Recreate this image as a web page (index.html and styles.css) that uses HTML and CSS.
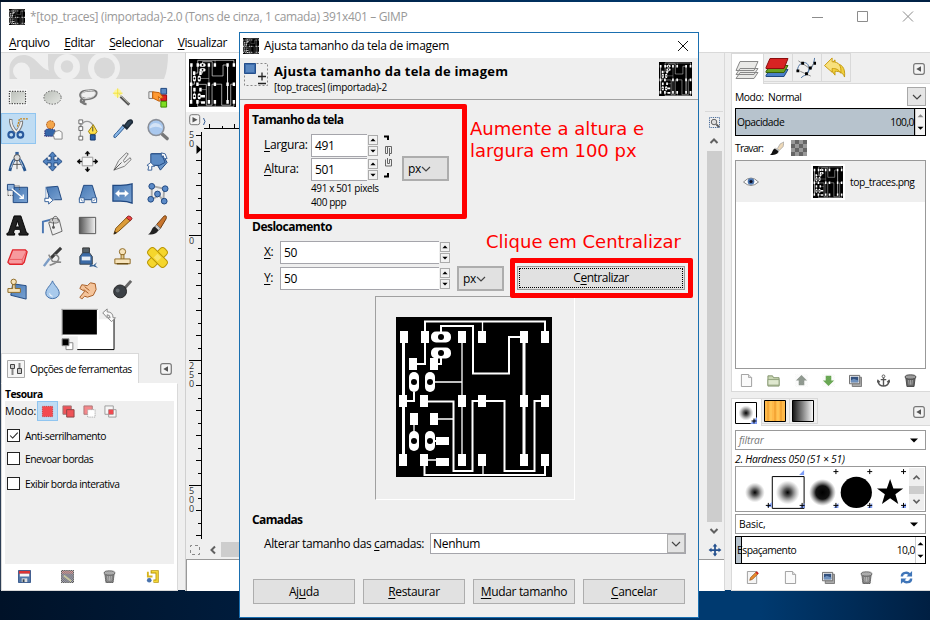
FILE: index.html
```html
<!DOCTYPE html>
<html lang="pt-BR">
<head>
<meta charset="utf-8">
<title>GIMP</title>
<link rel="stylesheet" href="styles.css">
</head>
<body>
<svg class="defs" width="0" height="0">
  <defs>
    <linearGradient id="gGray" x1="0" y1="0" x2="1" y2="1"><stop offset="0" stop-color="#b9bdb7"/><stop offset="1" stop-color="#e6e8e4"/></linearGradient>
    <linearGradient id="gBlue" x1="0" y1="0" x2="1" y2="1"><stop offset="0" stop-color="#4577b4"/><stop offset="1" stop-color="#7ba3d2"/></linearGradient>
    <linearGradient id="gRamp" x1="0" x2="1" y1="0" y2="0"><stop offset="0" stop-color="#555"/><stop offset="1" stop-color="#f4f4f4"/></linearGradient>
    <linearGradient id="gBlack" x1="0" x2="1" y1="0" y2="0"><stop offset="0" stop-color="#111"/><stop offset="1" stop-color="#fff"/></linearGradient>
    <radialGradient id="gSoft"><stop offset="0" stop-color="#000"/><stop offset=".35" stop-color="#333" stop-opacity=".8"/><stop offset="1" stop-color="#777" stop-opacity="0"/></radialGradient>
    <radialGradient id="gMid"><stop offset="0" stop-color="#000"/><stop offset=".5" stop-color="#111"/><stop offset="1" stop-color="#555" stop-opacity="0"/></radialGradient>
    <pattern id="dither" width="2" height="2" patternUnits="userSpaceOnUse"><path d="M0 0h1v1H0zM1 1h1v1H1z" fill="#efefef"/></pattern>
  </defs>
  <symbol id="board" viewBox="0 0 156 160">
    <path fill="#000" d="M0 0h156v160H0z"/>
    <g fill="none" stroke="#fff" stroke-width="2">
      <path d="M17 47h12V4.500h120V20M45 20V9h32v47.500h36V20h11M45 36v11h-7M18 75v9H8M28 84.500h29.500V154h19V84H86M90 84h18.500v70h30V84H149M28.500 142v16H149v-16M34 124h8"/>
      <path stroke-width="3" d="M7.500 20v122M128 20v122"/>
      <path stroke-width="1.300" d="M86.500 4.500V20M66 20v122M38 65h28M42 102h15M18 108v8M32 143h8M87 158v-12"/>
    </g>
    <path fill="#fff" d="M4 14h8v12H4zM25 14h8v12h-8zM62 14h8v12h-8zM82 14h8v12h-8zM124 14h8v12h-8zM145 14h8v12h-8zM3 78h8v12H3zM24 78h8v12h-8zM62 78h8v12h-8zM82 78h8v12h-8zM124 78h8v12h-8zM145 78h8v12h-8zM3 137h8v12H3zM24 137h8v12h-8zM62 137h8v12h-8zM82 137h8v12h-8zM124 137h8v12h-8zM145 137h8v12h-8zM13 41h8v12h-8zM34 41h8v12h-8zM14 96h8v12h-8zM34 96h8v12h-8zM40 120h13v8H40zM40 141h13v8H40z"/>
    <g fill="#fff"><rect x="35" y="14.500" width="20" height="11" rx="5"/><rect x="35" y="30.500" width="20" height="11" rx="5"/><rect x="13" y="55" width="10" height="20" rx="5"/><rect x="29" y="55" width="10" height="20" rx="5"/><rect x="13" y="114" width="10" height="20" rx="5"/><rect x="29" y="114" width="10" height="20" rx="5"/></g>
    <g fill="#000"><circle cx="45" cy="20" r="3"/><circle cx="45" cy="36" r="3"/><circle cx="18" cy="65" r="3"/><circle cx="34" cy="65" r="3"/><circle cx="18" cy="124" r="3"/><circle cx="34" cy="124" r="3"/></g>
  </symbol>
  <symbol id="collapse" viewBox="0 0 12 12"><rect x=".7" y=".7" width="10.600" height="10.600" rx="2" fill="#f4f4f4" stroke="#777" stroke-width="1.200"/><path d="M8 3.300v5.400L3.300 6z" fill="#555"/></symbol>
  <symbol id="page" viewBox="0 0 14 14"><path d="M1.500.5h7.700l3.300 3.300v9.700h-11z" fill="#fafafa" stroke="#999"/><path d="M9.200.5v3.300h3.300" fill="#ddd" stroke="#aaa"/></symbol>
  <symbol id="dup" viewBox="0 0 14 14"><path d="M3.500 3.500h10v10h-10z" fill="#aaa" stroke="#777"/><path d="M.5 1.500h11v9H.5z" fill="#eee" stroke="#666"/><path d="M2 3h8v6H2z" fill="#33517e"/><path d="M2 7l3-2 5 2v2H2z" fill="#6d90bd"/></symbol>
  <symbol id="trash" viewBox="0 0 14 14"><path d="M2 4h10l-1.200 9.500H3.200z" fill="#666" stroke="#444"/><ellipse cx="7" cy="3.200" rx="5.800" ry="2.300" fill="#9b9b9b" stroke="#444"/><path d="M5 6.500l.5 5M7 6.500v5M9 6.500l-.5 5" stroke="#aaa"/></symbol>
  <symbol id="spinUp" viewBox="0 0 10 6"><path d="M5 1l3.300 3.500H1.700z" fill="currentColor"/></symbol>
  <symbol id="spinDown" viewBox="0 0 10 6"><path d="M5 5l3.300-3.500H1.700z" fill="currentColor"/></symbol>
  <symbol id="chev" viewBox="0 0 10 8"><path d="M1 2l4 4 4-4" fill="none" stroke="#444" stroke-width="1.200"/></symbol>
  <symbol id="chevBold" viewBox="0 0 10 8"><path d="M1.500 6L5 2.500 8.500 6" fill="none" stroke="#606060" stroke-width="2"/></symbol>
</svg>

<div class="window">
  <header class="titlebar">
    <svg class="app-icon" viewBox="0 0 156 160" preserveAspectRatio="none"><use href="#board"/></svg>
    <span class="title">*[top_traces] (importada)-2.0 (Tons de cinza, 1 camada) 391x401 – GIMP</span>
    <svg class="win-buttons" viewBox="0 0 110 20"><path d="M4 10.500h11M49.500 4.500h10v10h-10zM95 4.500l10 10M105 4.500l-10 10" fill="none" stroke="#8c8c8c"/></svg>
  </header>
  <nav class="menubar"><span><u>A</u>rquivo</span><span><u>E</u>ditar</span><span><u>S</u>elecionar</span><span><u>V</u>isualizar</span></nav>

  <main class="workspace">
    <section class="toolbox">
      <svg class="wilber" viewBox="0 0 184 28">
        <path d="M9.500 26V14C11 4 22-1 31 4C39 8 42 18 53 18V8L49 1h119c0 9-1 18-4 25z" fill="#d9d9d9"/>
        <circle cx="21.500" cy="18" r="8.500" fill="#efefef"/><path d="M13 18h17v9H18z" fill="#efefef"/>
        <path d="M33 26c6-1 13-4 17-8l6 8z" fill="#d9d9d9"/>
        <path d="M48 1h7v24a16 16 0 0 1-7-13z" fill="#d9d9d9"/>
        <circle cx="67" cy="14" r="13" fill="#efefef"/>
        <circle cx="67" cy="13.500" r="6.200" fill="#d9d9d9"/>
        <circle cx="104" cy="15" r="16" fill="#efefef"/><circle cx="104.500" cy="15" r="10.500" fill="#d9d9d9"/>
      </svg>
      <div class="tools">
        <span class="tool"><svg viewBox="0 0 24 24"><path d="M4 5h17v14H4z" fill="url(#gGray)" stroke="#fff" stroke-width="2"/><path d="M3.500 5.500h17v13h-17z" fill="none" stroke="#111" stroke-dasharray="1.500 1.200"/></svg></span>
        <span class="tool"><svg viewBox="0 0 24 24"><ellipse cx="12" cy="12" rx="9" ry="7" fill="url(#gGray)" stroke="#555" stroke-dasharray="1.500 1.500"/></svg></span>
        <span class="tool"><svg viewBox="0 0 24 24"><g fill="none" stroke="#777" stroke-width="2.400"><path d="M8 14C3 11 3 6 10 5s13-1 11 4-11 5-13 4-4 3-2 4 4-3 1-4"/><path d="M7 16c0 3 2 3 4 3"/></g><path d="M8 13.500C4 10 5 7 10 5.500s11-1 10 3-10 5-12 4.500" fill="none" stroke="#ddd"/></svg></span>
        <span class="tool"><svg viewBox="0 0 24 24"><circle cx="7" cy="7.500" r="4" fill="#fff68a" opacity=".8"/><path d="M7 2.500v10M2 7.500h10" stroke="#f2e23c"/><path d="M10 11l9 8.500" stroke="#555" stroke-width="3"/><path d="M8 8l10.500 10" stroke="#c8c8b8"/></svg></span>
        <span class="tool"><svg viewBox="0 0 24 24"><path d="M15.500 2.500h6v6h-6z" fill="#5b8ac4" stroke="#1c447c"/><path d="M15.500 9.500h6v6h-6z" fill="#d22" stroke="#900"/><path d="M15.500 16h6v6h-6z" fill="#7fdd22" stroke="#3d8a00"/><path d="M3 6h4v7H3z" fill="#eee" stroke="#777"/><path d="M7 6l7 1 4 5-3 1-2-2 1 5-6-3H7z" fill="#ff9a33" stroke="#c05a00"/></svg></span>

        <span class="tool selected"><svg viewBox="0 0 24 24"><path d="M5 2c-1 6 2 10 6 14M16 4c1 5-2 8-5 12" stroke="#777" stroke-width="3.600" fill="none"/><path d="M5 3c0 5 2 9 6 13M16 5c0 4-2 7-5 11" stroke="#eee" stroke-width="1.800" fill="none"/><circle cx="5.500" cy="18.500" r="3" fill="none" stroke="#2a5a9e" stroke-width="2.200"/><circle cx="15" cy="18.500" r="3" fill="none" stroke="#2a5a9e" stroke-width="2.200"/><path d="M12 10l2-8h9" fill="none" stroke="#c98310" stroke-width="1.300" stroke-dasharray="2 1"/></svg></span>
        <span class="tool"><svg viewBox="0 0 24 24"><path d="M4 19v-6q5-4 11 0v6z" fill="#3566a8" stroke="#2b1a66" stroke-dasharray="1.300 1"/><circle cx="10" cy="7" r="4.200" fill="#f3a64b" stroke="#a64d10" stroke-dasharray="2 1"/><path d="M15 14l4-1 3 2v7h-8l-1-4z" fill="#fafafa" stroke="#888"/></svg></span>
        <span class="tool"><svg viewBox="0 0 24 24"><path d="M4.500 4v17" stroke="#888"/><path d="M3 2h4v4H3zM3 9h4v4H3zM3 19h4v4H3z" fill="#fff" stroke="#666"/><path d="M5 8C8 2 15 2 18 8" fill="none" stroke="#999" stroke-width="1.500"/><path d="M18 7l4 7-2 3h-5l-2-3z" fill="#ffe14a" stroke="#9a7a00"/><path d="M17.500 9v5" stroke="#444"/><path d="M15 17.500h5V23h-5z" fill="#2c61a5" stroke="#14386d"/></svg></span>
        <span class="tool"><svg viewBox="0 0 24 24"><path d="M15 9l-8 9q-3 4-4 2t3-5l7-8z" fill="#88b6e6" stroke="#2c5a92"/><path d="M12 7l5 5M14 8l4-5q3-2 4 0t-1 3l-4 5z" stroke="#1d2a38" stroke-width="1.500" fill="#2d4153"/></svg></span>
        <span class="tool"><svg viewBox="0 0 24 24"><path d="M17 17l5 4.500" stroke="#777" stroke-width="3.500" stroke-linecap="round"/><circle cx="10.500" cy="10" r="8.300" fill="#a9c8ee" stroke="#8a8f98" stroke-width="1.600"/><path d="M4 11q6-4 13 0A7 7 0 0 0 4 9z" fill="#d4e3f6"/></svg></span>

        <span class="tool"><svg viewBox="0 0 24 24"><path d="M11.500 2v5" stroke="#335f99" stroke-width="3.500"/><path d="M10 9C6 12 5 17 4 22M13 9c4 3 5 8 7 13" fill="none" stroke="#26558f" stroke-width="3"/><path d="M9 9l-4 10M14 9l4 9" stroke="#b9c7d8"/><circle cx="11.500" cy="8" r="3.200" fill="#ddd" stroke="#555"/><path d="M7 15h9M11.500 11v9" stroke="#555"/></svg></span>
        <span class="tool"><svg viewBox="0 0 24 24"><path d="M12 2l4 4.500h-2.500v4h4V8l4.500 4-4.500 4v-2.500h-4v4H16L12 22l-4-4.500h2.500v-4h-4V16L2 12l4.500-4v2.500h4v-4H8z" fill="#5385c2" stroke="#1f4780"/></svg></span>
        <span class="tool"><svg viewBox="0 0 24 24"><path d="M6.500 7.500h11v9h-11z" fill="#f6f6f6" stroke="#999"/><path d="M12 1l2.500 3h-2v2h-1V4h-2zM12 23l2.500-3h-2v-2h-1v2h-2zM1 12l3-2.500v2h2v1H4v2zM23 12l-3-2.500v2h-2v1h2v2z" fill="#000" stroke="#000" stroke-width=".5"/></svg></span>
        <span class="tool"><svg viewBox="0 0 24 24"><path d="M3 21l5-10 8-8 2 1-5 7 1 2 6-5 1 2-7 7z" fill="#eee" stroke="#777"/><path d="M3 21l8-8" stroke="#555"/></svg></span>
        <span class="tool"><svg viewBox="0 0 24 24"><path d="M6 4h11l5 9-7 8-3-5-6-1z" fill="url(#gBlue)" stroke="#1f4780"/><path d="M5 4h11l4 9-6 3H5z" fill="#5c8bc4" stroke="#1f4780"/><path d="M16 3l4 1 2 5h-3l-1-3-2 1zM2 21l1-4-2-1 4-3 4 4H6v4z" fill="#fff" stroke="#3a6096"/></svg></span>

        <span class="tool"><svg viewBox="0 0 24 24"><path d="M7.500 5.500h15v16h-15z" fill="url(#gBlue)" stroke="#1f4780"/><path d="M1.500 2.500h7v6h-7z" fill="#8fb2dc" stroke="#1f4780"/><path d="M2 14V9M2 14h5M9 4h5v5" fill="none" stroke="#444" stroke-dasharray="1 1"/><path d="M6 7l12 10m0-4v4h-4" fill="none" stroke="#fff" stroke-width="1.400"/></svg></span>
        <span class="tool"><svg viewBox="0 0 24 24"><path d="M5.500 5.500l12-1 4 14h-12z" fill="url(#gBlue)" stroke="#1f4780"/><path d="M5 5v13h9" fill="none" stroke="#8caad0"/><path d="M4 17h4v-2.500l4.500 4.500L8 23v-2.500H4z" fill="#fff" stroke="#335f99"/></svg></span>
        <span class="tool"><svg viewBox="0 0 24 24"><path d="M8 3.500h9l4.500 15h-18z" fill="url(#gBlue)" stroke="#1f4780"/><path d="M3.500 16.500h5v5h-5zM16.500 16.500h5v5h-5z" fill="#fff" stroke="#335f99"/><path d="M5 18l2 2M20 18l-2 2" stroke="#335f99"/></svg></span>
        <span class="tool"><svg viewBox="0 0 24 24"><path d="M2 3.500h8q7 0 12-1.500v20q-5-2-12-2H2z" fill="url(#gBlue)" stroke="#1f4780" stroke-width="1.300"/><path d="M4 12l5-4.500v3h5v-3l5 4.500-5 4.500v-3H9v3z" fill="#fff" stroke="#5d84b8" stroke-width=".6"/></svg></span>
        <span class="tool"><svg viewBox="0 0 24 24"><path d="M6 4l13 3-1 13-4-6-8 4z" fill="none" stroke="#aaa" stroke-width="2"/><g fill="#5c8bc8" stroke="#1f4780"><circle cx="6" cy="4.500" r="3"/><circle cx="20" cy="7" r="3"/><circle cx="5" cy="18" r="3"/><circle cx="19" cy="20" r="3"/><circle cx="12" cy="12.500" r="3"/></g></svg></span>

        <span class="tool"><svg viewBox="0 0 24 24"><path d="M8.500 2h7l6 18h1.500v2h-9.500v-2h2l-1-4H9l-1.500 4H9v2H1v-2h1.500zM12 7l-2 6.500h4z" fill="#222" fill-rule="evenodd" stroke="#000"/></svg></span>
        <span class="tool"><svg viewBox="0 0 24 24"><path d="M2 20V8l8-2" fill="none" stroke="#4a77b3" stroke-width="2"/><path d="M8 9l11-3 3 12-10 4z" fill="#eee" stroke="#666"/><ellipse cx="14" cy="7" rx="5" ry="2.500" fill="#ccc" stroke="#777"/><path d="M12 7c0-6 6-6 6 0M13 8v5" fill="none" stroke="#555"/><circle cx="13" cy="14" r="1.500" fill="#555"/></svg></span>
        <span class="tool"><svg viewBox="0 0 24 24"><path d="M3.500 3.500h17v17h-17z" fill="url(#gRamp)" stroke="#555"/></svg></span>
        <span class="tool"><svg viewBox="0 0 24 24"><path d="M3 21l2-6L17 3l4 3L8 18z" fill="#dc9c37" stroke="#7a4c08"/><path d="M16 4l2-2q3 0 4 3l-2 2z" fill="#e44" stroke="#8a2020"/><path d="M3 21l1-3 2 2z" fill="#222"/></svg></span>
        <span class="tool"><svg viewBox="0 0 24 24"><path d="M11 11L19 2q3-1 2 3l-6 10z" fill="#c9762e" stroke="#6d3a0c"/><path d="M11 11l4 4-2 2-4-3z" fill="#ccc" stroke="#777"/><path d="M9 13l4 4c-2 4-7 5-11 4 4-1 3-6 7-8z" fill="#222"/></svg></span>

        <span class="tool"><svg viewBox="0 0 24 24"><path d="M7 4h13l2 2-3 11-2 2H4l-2-2 1-3z" fill="#f79a9e" stroke="#e0252c" stroke-width="1.400" stroke-linejoin="round"/><path d="M3 14h14l4-8M17 14v4" fill="none" stroke="#ec5e63"/></svg></span>
        <span class="tool"><svg viewBox="0 0 24 24"><path d="M21 2L10 13" stroke="#3a3a3a" stroke-width="3.200"/><path d="M9 13l-6 8" stroke="#7b9cc5" stroke-width="2.500"/><path d="M8 9l4 7 9 1M14 9c4 0 6 4 3 7s-5 3-8 4" fill="none" stroke="#888" stroke-width="1.600"/></svg></span>
        <span class="tool"><svg viewBox="0 0 24 24"><path d="M7 2h7v5H7z" fill="#556068" stroke="#333"/><path d="M7 7h7l3 4v8H4v-8z" fill="#3b6aa6" stroke="#3a444c"/><path d="M6 11h9v4H6z" fill="#e8eef5"/><path d="M15 18l3 2 4-3-2 3 3 3-5-2-4 1z" fill="#356296"/></svg></span>
        <span class="tool"><svg viewBox="0 0 24 24"><circle cx="12" cy="6" r="3.300" fill="#f6e3bb" stroke="#8d6a25"/><path d="M10.500 9h3v5h-3z" fill="#e8cf96" stroke="#8d6a25"/><path d="M4 13.500h16v5H4z" fill="#f6e3bb" stroke="#8d6a25"/><path d="M6 18.500h12" stroke="#6d5015" stroke-width="1.500"/></svg></span>
        <span class="tool"><svg viewBox="0 0 24 24"><g fill="#f5d62c" stroke="#b99500"><rect x="0" y="7.500" width="24" height="9" rx="3.500" transform="rotate(-45 12 12)"/><rect x="0" y="7.500" width="24" height="9" rx="3.500" transform="rotate(45 12 12)"/></g><path d="M12 8l4 4-4 4-4-4z" fill="#f9e568"/></svg></span>

        <span class="tool"><svg viewBox="0 0 24 24"><path d="M7 6l14 2v14L5 18z" fill="url(#gBlue)" stroke="#1f4780"/><circle cx="8" cy="4" r="2.800" fill="#f6e3bb" stroke="#8d6a25"/><path d="M7 7h2.500v4H15v4H2v-4h5z" fill="#f6e3bb" stroke="#8d6a25"/></svg></span>
        <span class="tool"><svg viewBox="0 0 24 24"><path d="M12 3c2 5 7 8 7 13a7 5.500 0 0 1-14 0c0-5 5-8 7-13z" fill="#a9caec" stroke="#3f6ea8"/><path d="M9 16q0 3 3 3" fill="none" stroke="#fff"/></svg></span>
        <span class="tool"><svg viewBox="0 0 24 24"><path d="M4 20l5-6-5-3 2-4 6 1 3-3 5 1 1 6-3 6-6 2-3-1-3 3z" fill="#f4c49b" stroke="#a65b22"/><path d="M9 9l5 4M8 12l5 4" stroke="#a65b22"/></svg></span>
        <span class="tool"><svg viewBox="0 0 24 24"><path d="M13 12l8-9" stroke="#666" stroke-width="3"/><circle cx="9.500" cy="14" r="6.700" fill="#3c4146" stroke="#222"/><circle cx="7" cy="13" r="2" fill="#646b70"/></svg></span>
      </div>
      <svg class="swatches" viewBox="0 0 184 50">
        <path d="M78.500 14.500h37v31h-37z" fill="#fff"/><path d="M78 45.500h37.500V14" stroke="#000" fill="none"/>
        <path d="M62 5h38v27H62z" fill="#fff"/><path d="M62 4.500h37M62.500 4v27" stroke="#999"/><path d="M63 5h35v25H63z"/>
        <path d="M104 8l4.500-4v3q6 0 6 6h2.500l-4 4-4-4h2.500q0-3-3-3v3z" fill="#f8f8f8" stroke="#888"/>
        <path d="M66.500 38.500h7v7h-7z" fill="#fff" stroke="#888"/><path d="M62.500 34.500h7v7h-7z" stroke="#888"/>
      </svg>
      <div class="opts-tabs">
        <div class="opts-tab"><svg viewBox="0 0 18 18"><path d="M.5.500h17v17H.5z" fill="#f6f6f6" stroke="#aaa"/><path d="M5.500 8v7M12.500 3v9" stroke="#888" stroke-width="2"/><path d="M3.500 4.500h4v4h-4zM10.500 8.500h4v5h-4z" fill="#ccc" stroke="#444"/></svg><span>Opções de ferramentas</span></div>
        <svg class="collapse"><use href="#collapse"/></svg>
      </div>
      <div class="opts">
        <b>Tesoura</b>
        <div class="opts-body">
          <div class="mode"><span>Modo:</span>
            <span class="mbtn on"><svg viewBox="0 0 14 14"><path d="M1.500 1.500h11v11h-11z" fill="#f44a4f" stroke="#c33" stroke-dasharray="1 1"/></svg></span>
            <span class="mbtn"><svg viewBox="0 0 14 14"><path d="M1 1h9v9H1z" fill="#ef5358" stroke="#977"/><path d="M5 5h8v8H5z" fill="#ef5358" stroke="#844"/></svg></span>
            <span class="mbtn"><svg viewBox="0 0 14 14"><path d="M1 1h9v9H1z" fill="#f4888b" stroke="#a77"/><path d="M5 5h8v8H5z" fill="#fff" stroke="#999" stroke-dasharray="1 1"/></svg></span>
            <span class="mbtn"><svg viewBox="0 0 14 14"><path d="M1 1h9v9H1zM5 5h8v8H5z" fill="#f6f6f6" stroke="#999"/><path d="M5 5h5v5H5z" fill="#ef4a50"/></svg></span>
          </div>
          <label class="check"><i><svg viewBox="0 0 13 13"><path d="M2.500 6.500l3 3 6-6.500" fill="none" stroke="#222" stroke-width="1.200"/></svg></i>Anti-serrilhamento</label>
          <label class="check"><i></i>Enevoar bordas</label>
          <label class="check last"><i></i>Exibir borda interativa</label>
        </div>
        <div class="opts-actions">
          <svg viewBox="0 0 14 14"><path d="M.5.500h13v13H.5z" fill="#5277a8" stroke="#35568a"/><path d="M1 1h12v3H1z" fill="#d33"/><path d="M2 4h10v3H2z" fill="#f5f5f5"/><path d="M4 9h6v4H4z" fill="#ddd"/><path d="M5 10h2v3H5z" fill="#345"/></svg>
          <svg viewBox="0 0 14 14"><path d="M.5.500h13v13H.5z" fill="#445" stroke="#333"/><path d="M1 1h12v3H1z" fill="#844"/><path d="M3 6l8 6" stroke="#aa6" stroke-width="2"/><path d="M0 0h14v14H0z" fill="url(#dither)" opacity=".8"/></svg>
          <svg viewBox="0 0 14 14"><use href="#trash"/><path d="M0 0h14v14H0z" fill="url(#dither)" opacity=".4"/></svg>
          <svg viewBox="0 0 14 14"><path d="M5 2h7v10H8" fill="none" stroke="#b89400" stroke-width="3.400"/><path d="M6 2h6v10H8" fill="none" stroke="#f5d93c" stroke-width="1.600"/><path d="M2 2v5h5" fill="none" stroke="#d8b41c" stroke-width="2"/><circle cx="3.500" cy="11" r="2.500" fill="#4a74ae"/></svg>
        </div>
      </div>
    </section>

    <section class="image-window">
      <div class="image-tabs"><div class="image-tab"><svg viewBox="0 0 156 160" preserveAspectRatio="none"><use href="#board"/></svg></div></div>
      <div class="canvas-row">
        <svg class="vruler" viewBox="0 0 55 429">
          <rect x="3.700" y="3.700" width="10" height="10" rx="2" fill="#f4f4f4" stroke="#777"/><path d="M6.500 6v5.400L11.500 8.700z" fill="#555"/>
          <path d="M18 17.500h37M23.500 13v4M36.500 15v2M48.500 13v4M15.500 21v407" stroke="#000"/>
          <path d="M15.500 38.500l-5-4.500v9z" fill="#000"/>
          <path d="M10 24.500h5M10 49.500h5M12 62.500h3M10 74.500h5M12 87.500h3M10 99.500h5M12 112.500h3M3 124.500h12M12 137.500h3M10 149.500h5M12 162.500h3M10 174.500h5M12 187.500h3M10 199.500h5M12 212.500h3M10 224.500h5M12 237.500h3M3 249.500h12M12 262.500h3M10 274.500h5M12 287.500h3M10 299.500h5M12 312.500h3M10 324.500h5M12 337.500h3M10 349.500h5M12 362.500h3M3 374.500h12M12 387.500h3M10 399.500h5M12 412.500h3M10 424.500h5" stroke="#000"/>
          <g class="ruler-text"><text><tspan x="3" y="27">5</tspan><tspan x="3" y="36">0</tspan></text><text x="3" y="133">0</text><text><tspan x="3" y="258">2</tspan><tspan x="3" y="267">5</tspan><tspan x="3" y="276">0</tspan></text><text><tspan x="3" y="383">5</tspan><tspan x="3" y="392">0</tspan><tspan x="3" y="401">0</tspan></text></g>
          <path d="M17.500 7q3 3.500 0 7" fill="none" stroke="#345c94"/>
        </svg>
        <div class="vscroll">
          <svg class="zoomfit" viewBox="0 0 12 12"><path d="M.5.500h11v11H.5z" fill="none" stroke="#1c4a86" stroke-dasharray="1 1"/><circle cx="5.500" cy="5.500" r="3" fill="#ddd" stroke="#555"/><path d="M8 8l3 3" stroke="#555" stroke-width="2"/></svg>
          <svg class="arrow"><use href="#chevBold"/></svg>
          <div class="vthumb"></div>
          <svg class="arrow down"><use href="#chevBold"/></svg>
        </div>
      </div>
      <div class="hscroll">
        <svg class="qmask" viewBox="0 0 12 12"><path d="M1.500 1.500h9v9h-9z" fill="none" stroke="#888" stroke-dasharray="3 3" stroke-dashoffset="1.500"/></svg>
        <span class="hleft"><svg><use href="#chevBold"/></svg></span><span class="hthumb"></span>
        <svg class="nav" viewBox="0 0 24 24"><path d="M12 1l4 5h-2.500v4.500h4.500V8l5 4-5 4v-2.500h-4.500V18H16l-4 5-4-5h2.500v-4.500H6V16l-5-4 5-4v2.500h4.500V6H8z" fill="#24508e"/></svg>
      </div>
      <div class="status"></div>
    </section>

    <section class="dock">
      <div class="tabs">
        <span class="tab active"><svg viewBox="0 0 24 20"><path d="M1 19l4-6h18l-4 6zM1 15l4-6h18l-4 6zM1 11l4-9h18l-4 9z" fill="#e9e9e7" stroke="#888"/></svg></span>
        <span class="tab"><svg viewBox="0 0 24 20"><path d="M1 18l4-6h18l-4 7H1z" fill="#4a7fc8" stroke="#1f4780"/><path d="M1 14l4-6h18l-4 7H1z" fill="#6aa022" stroke="#376008"/><path d="M1 10l4-9h18l-4 10H1z" fill="#d82323" stroke="#8c0d0d"/></svg></span>
        <span class="tab"><svg viewBox="0 0 24 22"><path d="M3 14c1-10 12-11 12-2s-6 6-8 10M21 1c-1 9-4 12-9 16" fill="none" stroke="#476f9f"/><path d="M4 4l12 8 5-6M6 15l11 5" fill="none" stroke="#888"/><path d="M2 13h3v3H2zM7 5h3v3H7zM15 10h3v3h-3zM20 5h2.500v3H20zM11 16h3v3h-3z"/></svg></span>
        <span class="tab"><svg viewBox="0 0 24 22"><path d="M12 3v4c7 0 11 4 10 14-2-5-5-6-10-6v4L5 10z" fill="#f0cf3c" stroke="#c29a10"/><path d="M9 1v4c7 0 10 4 9 12-2-4-5-5-9-5v4L1 9z" fill="#f8e07c" stroke="#c89a10"/></svg></span>
        <svg class="collapse"><use href="#collapse"/></svg>
      </div>
      <div class="layers">
        <div class="row-mode"><span class="lbl">Modo:&nbsp; Normal</span><span class="dd"><svg><use href="#chev"/></svg></span></div>
        <div class="slider"><div class="fill full"><span>Opacidade</span><span>100,0</span></div><div class="mini-spin"><svg class="dim"><use href="#spinUp"/></svg><svg><use href="#spinDown"/></svg></div></div>
        <div class="lock"><span>Travar:</span><svg viewBox="0 0 16 16"><path d="M9 8l3-5 4-2-1 5-4 4z" fill="#eed9b8" stroke="#999" stroke-width=".7"/><path d="M7 7l4 3-1 3-5 1z" fill="#bbb"/><path d="M6 8l4 3c-1 4-5 4-9 4 3-2 2-5 5-7z" fill="#111"/></svg><i class="checker"></i></div>
        <div class="layer-list"><div class="layer">
          <svg class="eye" viewBox="0 0 16 10"><path d="M.5 5Q8-3 15.500 5 8 12 .5 5z" fill="#fff" stroke="#888"/><circle cx="8" cy="4.500" r="3.300" fill="#4a74ae"/><circle cx="8" cy="4.500" r="1.600" fill="#112"/></svg>
          <svg class="thumb" viewBox="0 0 156 160" preserveAspectRatio="none"><use href="#board"/></svg><span>top_traces.png</span></div></div>
        <div class="actions seven">
          <svg><use href="#page"/></svg>
          <svg viewBox="0 0 14 14"><path d="M1 2h5l1 2h6v9H1z" fill="#c9d7b4" stroke="#7d8f68"/><path d="M1 6h12v6H1z" fill="#dfe8cf" stroke="#8fa07a"/></svg>
          <svg viewBox="0 0 14 14"><path d="M7 1l6 6h-3v5H4V7H1z" fill="#707c70"/><path d="M0 0h14v14H0z" fill="url(#dither)" opacity=".5"/></svg>
          <svg viewBox="0 0 14 14"><path d="M7 13L1 7h3V2h6v5h3z" fill="#3d8f20"/><path d="M0 0h14v14H0z" fill="url(#dither)" opacity=".5"/></svg>
          <svg><use href="#dup"/></svg>
          <svg viewBox="0 0 14 14"><circle cx="7" cy="2.500" r="1.500" fill="none" stroke="#555"/><path d="M7 4v9M4 6h6M1 8q1 5 6 5t6-5M0 9l1-2 2 2M14 9l-1-2-2 2" fill="none" stroke="#555" stroke-width="1.500"/></svg>
          <svg><use href="#trash"/></svg>
        </div>
      </div>
      <div class="tabs lower">
        <span class="tab active"><svg viewBox="0 0 22 22"><path d="M.5.500h21v21H.5z" fill="#fff" stroke="#000"/><circle cx="11" cy="11" r="7.500" fill="url(#gSoft)"/><path d="M22 15v7h-7z" fill="#7d9cf5"/><path d="M16.500 19h5M19 16.500v5" stroke="#000"/></svg></span>
        <span class="tab"><svg viewBox="0 0 22 22"><path d="M.5.500h21v21H.5z" fill="#ffb949" stroke="#000"/><path d="M4 1v20M11 1v20M17 1v20" stroke="#e89425"/><path d="M7 1v20M14 1v20" stroke="#ffd060"/></svg></span>
        <span class="tab"><svg viewBox="0 0 22 22"><path d="M.5.500h21v21H.5z" fill="url(#gBlack)" stroke="#000"/></svg></span>
        <svg class="collapse"><use href="#collapse"/></svg>
      </div>
      <div class="brushes">
        <div class="combo hint"><i>filtrar</i><svg viewBox="0 0 8 5"><path d="M0 .5h8l-4 4z"/></svg></div>
        <i class="brush-name">2. Hardness 050 (51 × 51)</i>
        <div class="brush-box">
          <svg viewBox="0 0 174 43">
            <circle cx="19" cy="25.500" r="10" fill="url(#gSoft)"/>
            <path d="M36.500 9.500h32v32h-32z" fill="#fff" stroke="#000"/><circle cx="52" cy="25.500" r="12" fill="url(#gSoft)"/>
            <circle cx="87" cy="25.500" r="13.500" fill="url(#gMid)"/><circle cx="121" cy="25.500" r="15.700"/>
            <path d="M155 12l3.300 9.400h9.900l-7.900 6 2.900 9.600-8.200-5.800-8.200 5.800 2.900-9.600-7.900-6h9.900z"/>
            <path d="M68.500 3v5h-5zM36 35v5h-5zM69 36v5h-5zM103 36v5h-5zM137 36v5h-5zM171 36v5h-5z" fill="#7d9cf5"/>
            <path d="M30 38.500h5M32.500 36v5M64 38.500h5M66.500 36v5M98 38.500h5M100.500 36v5M132 38.500h5M134.500 36v5M166 38.500h5M168.500 36v5M98 4.500h5M100.500 2v5M132 4.500h5M134.500 2v5M166 4.500h5M168.500 2v5" stroke="#000"/>
          </svg>
          <div class="bscroll"><svg><use href="#chevBold"/></svg><i></i><svg class="down"><use href="#chevBold"/></svg></div>
        </div>
        <div class="combo"><span>Basic,</span><svg viewBox="0 0 8 5"><path d="M0 .5h8l-4 4z"/></svg></div>
        <div class="slider spacing"><div class="fill"><span>Espaçamento</span><span>10,0</span></div><div class="mini-spin"><svg><use href="#spinUp"/></svg><svg><use href="#spinDown"/></svg></div></div>
        <div class="actions five">
          <svg viewBox="0 0 14 14"><path d="M1.500.5h10v13h-10z" fill="#f5f5f5" stroke="#999"/><path d="M4 10l1-3 6-6 2 2-6 6z" fill="#e88b2c" stroke="#8a4a10" stroke-width=".7"/><path d="M11 1l2 2" stroke="#c22" stroke-width="2"/></svg>
          <svg><use href="#page"/></svg><svg><use href="#dup"/></svg>
          <svg viewBox="0 0 14 14"><use href="#trash"/><path d="M0 0h14v14H0z" fill="url(#dither)" opacity=".4"/></svg>
          <svg viewBox="0 0 14 14"><path d="M2 6c0-5 7-5 8-2M12 8c0 5-7 5-8 2" fill="none" stroke="#3f75b8" stroke-width="2.600"/><path d="M13 0v6H7zM1 14V8h6z" fill="#3f75b8"/></svg>
        </div>
      </div>
    </section>
  </main>
</div>

<div class="dialog">
  <div class="dlg-title"><svg viewBox="0 0 156 160" preserveAspectRatio="none"><use href="#board"/></svg><span>Ajusta tamanho da tela de imagem</span><svg class="close" viewBox="0 0 12 12"><path d="M1 1l10 10M11 1L1 11" stroke="#111" fill="none"/></svg></div>
  <div class="dlg-head">
    <svg class="resize" viewBox="0 0 24 24"><path d="M.5.500h23v22H.5z" fill="none" stroke="#888" stroke-dasharray="2 2"/><path d="M.5.500h11v10H.5z" fill="#3d6cab" stroke="#254f8c"/><path d="M2 2h8v7H2z" fill="#5a87c0"/><path d="M14 13.500h8M18 9.500v8M14 20.500h8" stroke="#222" stroke-width="1.300"/></svg>
    <div class="dlg-heading"><b>Ajusta tamanho da tela de imagem</b><small>[top_traces] (importada)-2</small></div>
    <svg class="dlg-thumb" viewBox="0 0 156 160" preserveAspectRatio="none"><use href="#board"/></svg>
  </div>
  <div class="dlg-body">
    <h3>Tamanho da tela</h3>
    <div class="size">
      <div class="size-rows">
        <div class="field"><label><u>L</u>argura:</label><span class="input">491</span><span class="spin"><svg><use href="#spinUp"/></svg><svg><use href="#spinDown"/></svg></span></div>
        <div class="field"><label><u>A</u>ltura:</label><span class="input">501</span><span class="spin"><svg><use href="#spinUp"/></svg><svg><use href="#spinDown"/></svg></span></div>
      </div>
      <svg class="chain" viewBox="0 0 10 46"><path d="M0 2.500h4V6M0 42.500h4V39" fill="none" stroke="#000" stroke-width="2"/><g fill="none" stroke="#666"><path d="M1.500 19.500h2V12.500h-2zM2 12.500h5.500v7h-2v-5M5.500 14v8M1.500 25.500v6.500h6v-6.500h-2v4M3.500 24v5.500h2"/></g></svg>
      <span class="unit">px<svg><use href="#chev"/></svg></span>
    </div>
    <p class="info">491 x 501 pixels</p>
    <p class="info">400 ppp</p>
    <h3 class="offset">Deslocamento</h3>
    <div class="offsets">
      <div class="off-rows">
        <div class="field wide"><label><u>X</u>:</label><span class="input">50</span><span class="spin"><svg><use href="#spinUp"/></svg><svg><use href="#spinDown"/></svg></span></div>
        <div class="field wide"><label><u>Y</u>:</label><span class="input">50</span><span class="spin"><svg><use href="#spinUp"/></svg><svg><use href="#spinDown"/></svg></span></div>
      </div>
      <span class="unit">px<svg><use href="#chev"/></svg></span>
      <button class="btn center"><span>C<u>e</u>ntralizar</span></button>
    </div>
    <div class="preview"><svg viewBox="0 0 156 160"><use href="#board"/></svg></div>
    <h3 class="layers-h">Camadas</h3>
    <div class="resize-row"><label>Alterar tamanho das <u>c</u>amadas:</label><span class="select"><span>Nenhum</span><i><svg><use href="#chev"/></svg></i></span></div>
    <div class="buttons"><button class="btn">Aj<u>u</u>da</button><button class="btn"><u>R</u>estaurar</button><button class="btn"><u>M</u>udar tamanho</button><button class="btn"><u>C</u>ancelar</button></div>
  </div>
</div>

<div class="mark mark-size"></div>
<div class="mark mark-center"></div>
<p class="note note-size">Aumente a altura e<br>largura em 100 px</p>
<p class="note note-center">Clique em Centralizar</p>
</body>
</html>
```
FILE: styles.css
```css
* { box-sizing: border-box; }
html, body { margin: 0; }
body {
  position: relative; width: 930px; height: 620px; overflow: hidden; padding-top: 2px;
  background: linear-gradient(90deg, #001228 0, #001c3c 240px, #003a70 700px, #003a70 760px, #001f42 930px);
  font-family: "Open Sans", "Noto Sans", sans-serif; font-size: 12px; line-height: 16px; color: #000;
}
svg { display: block; flex: none; }
svg.defs { position: absolute; }
u { text-decoration: underline; text-underline-offset: 2px; text-decoration-thickness: 1px; }
b { font-weight: 700; }

.window { width: 930px; height: 588px; background: #efefef; border-left: 1px solid #2c3e55; }
.titlebar { display: flex; align-items: center; height: 30px; padding-left: 8px; background: #fff; }
.app-icon { width: 16px; height: 16px; }
.title { margin-left: 5px; color: #999; font-size: 12px; letter-spacing: -0.34px; white-space: nowrap; }
.win-buttons { width: 110px; height: 20px; margin-left: auto; margin-right: 12px; }
.menubar { display: flex; height: 21px; padding: 3px 0 0 8px; background: #fff; border-bottom: 1px solid #d9d9d9; letter-spacing: -0.4px; }
.menubar span { margin-right: 14.500px; }
.workspace { display: grid; grid-template-columns: 183px 1fr 199px; height: 537px; }

.toolbox { display: flex; flex-direction: column; font-size: 10px; }
.wilber { width: 184px; height: 28px; margin-left: -1px; }
.tools { display: grid; grid-template-columns: repeat(5, 35px); grid-auto-rows: 32px; height: 224px; }
.tool { display: grid; place-items: center; padding-right: 2px; }
.tool svg { width: 23px; height: 23px; }
.tool.selected { background: #bfdcf3; border: 1px solid #90c5f0; height: 31px; }
.swatches { width: 184px; height: 49px; margin-left: -2px; }
.opts-tabs { display: flex; align-items: flex-end; height: 29px; }
.opts-tab { display: flex; align-items: center; width: 138px; height: 30px; padding-left: 5px; background: #fff; border: 1px solid #d9d9d9; border-bottom: 0; white-space: nowrap; }
.opts-tab svg { width: 18px; height: 18px; margin-right: 5px; }
.opts-tab span { font-size: 10.300px; letter-spacing: -0.53px; }
.opts-tabs .collapse { margin: 0 0 8px 21px; }
.collapse { width: 12px; height: 12px; }
.opts { flex: 1; width: 177px; padding: 3px 3px 0; background: #fff; border: 1px solid #d9d9d9; border-top-color: #fff; }
.opts b { display: block; height: 14px; line-height: 14px; font-size: 10.300px; letter-spacing: -0.5px; }
.opts-body { height: 163px; background: #efefef; }
.mode { display: flex; align-items: center; height: 20px; font-size: 10.500px; }
.mbtn { display: grid; place-items: center; width: 21px; height: 20px; }
.mbtn.on { background: #bfdcf3; border: 1px solid #90c5f0; margin-left: 1px; }
.mbtn svg { width: 13px; height: 13px; }
.check { display: flex; align-items: center; height: 23px; margin: 3px 0 0 2px; font-size: 10.300px; letter-spacing: -0.52px; }
.check + .check { margin-top: 0; }
.check.last { margin-top: 2px; }
.check i { width: 13px; height: 13px; margin-right: 5px; background: #fff; border: 1px solid #222; }
.check i svg { width: 11px; height: 11px; }
.opts-actions { display: flex; justify-content: space-between; padding: 6px 15px 0 13px; }
.opts-actions svg { width: 13px; height: 13px; }

.image-window { display: flex; flex-direction: column; margin-left: 1px; width: 540px; border-left: 1px solid #d0d0d0; border-right: 1px solid #d9d9d9; background: #efefef; }
.image-tabs { height: 58px; }
.image-tab { width: 60px; height: 59px; padding: 6px 3px; background: #fff; }
.image-tab svg { width: 47px; height: 48px; }
.canvas-row { display: flex; height: 429px; }
.vruler { width: 55px; height: 429px; }
.ruler-text { font-size: 9px; fill: #333; }
.vscroll { width: 18px; margin-left: auto; margin-right: 1px; display: flex; flex-direction: column; align-items: center; border-top: 1px solid #d9d9d9; }
.zoomfit { width: 11px; height: 11px; margin: 5px 0 6px; }
.vscroll .arrow { width: 10px; height: 8px; margin: 3px 0 6px; }
.vthumb { flex: 1; width: 15px; background: #cdcdcd; }
.vscroll .arrow.down { margin: 5px 0 5px; }
.down { transform: scaleY(-1); }
.hscroll { display: flex; align-items: center; height: 19px; }
.qmask { width: 12px; height: 12px; margin-left: 3px; }
.hleft { width: 16px; margin-left: 4px; display: grid; place-items: center; }
.hleft svg { width: 10px; height: 8px; transform: rotate(-90deg); }
.hthumb { width: 60px; height: 15px; background: #cdcdcd; }
.nav { width: 14px; height: 14px; margin-left: auto; margin-right: 2px; }
.status { flex: 1; background: #fff; border-top: 1px solid #999; border-left: 1px solid #999; }

.dock { display: flex; flex-direction: column; font-size: 10.300px; }
.tabs { display: flex; height: 30px; }
.tab { display: grid; place-items: center; width: 29px; height: 29px; padding-right: 2px; border: 1px solid #d9d9d9; border-left: 0; }
.tab.active { width: 33px; height: 31px; background: #fff; border: 1px solid #d9d9d9; border-bottom: 0; z-index: 1; }
.tab svg { width: 24px; height: 21px; }
.tabs .collapse { margin: 10px 5px 0 auto; }
.layers { height: 309px; padding: 3px 4px 0 3px; background: #fff; border: 1px solid #d9d9d9; border-right: 0; }
.row-mode { display: flex; justify-content: space-between; align-items: center; height: 19px; letter-spacing: -0.42px; }
.dd { display: grid; place-items: center; width: 19px; height: 19px; background: #e5e5e5; border: 1px solid #a8a8a8; }
.dd svg { width: 10px; height: 8px; }
.slider { display: flex; height: 28px; margin-top: 2px; border: 1px solid #000; background: #f4f4f4; letter-spacing: -0.5px; }
.fill { flex: 1; display: flex; justify-content: space-between; align-items: center; padding: 0 0 0 1px; }
.fill.full { background: #b7c3cd; border-right: 1px solid #000; }
.mini-spin { width: 10px; display: flex; flex-direction: column; justify-content: space-between; padding: 4px 0; border-left: 1px solid #ccc; }
.mini-spin svg { width: 9px; height: 6px; }
.mini-spin .dim { color: #888; }
.lock { display: flex; align-items: center; height: 24px; letter-spacing: -0.75px; }
.lock svg { width: 15px; height: 15px; margin: 0 7px 0 6px; }
.checker { width: 16px; height: 16px; background: repeating-conic-gradient(#666 0 25%, #999 0 50%) 0 0/8px 8px; }
.layer-list { height: 209px; border: 1px solid #999; }
.layer { display: flex; align-items: center; height: 41px; background: #efefef; letter-spacing: -0.45px; white-space: nowrap; }
.eye { width: 16px; height: 10px; margin-left: 7px; }
.thumb { width: 34px; height: 36px; margin: 0 5px 0 52px; border: 2px solid #fff; }
.actions { display: grid; justify-items: center; align-items: center; }
.actions svg { width: 13px; height: 13px; }
.seven { grid-template-columns: repeat(7, 27.300px); height: 22px; margin-left: -2px; }
.lower { margin-top: 6px; height: 27px; }
.lower .tab { width: 28px; height: 26px; }
.lower .tab.active { width: 31px; height: 28px; }
.lower .tab svg { width: 22px; height: 22px; }
.lower .collapse { margin-top: 8px; }
.brushes { flex: 1; padding: 4px 4px 0 3px; background: #fff; border: 1px solid #d9d9d9; border-right: 0; }
.combo { display: flex; align-items: center; justify-content: space-between; height: 20px; padding: 0 7px 0 3px; border: 1px solid #999; letter-spacing: -0.15px; }
.combo svg { width: 8px; height: 5px; }
.hint i { color: #777; }
.brush-name { display: block; height: 16px; line-height: 18px; letter-spacing: -0.25px; white-space: nowrap; }
.brush-box { display: flex; height: 46px; margin-bottom: 2px; border: 1px solid #999; }
.brush-box > svg { width: 173px; height: 43px; }
.bscroll { display: flex; flex-direction: column; align-items: center; justify-content: space-between; width: 15px; height: 42px; margin-top: 1px; padding: 6px 0 5px; background: #efefef; }
.bscroll svg { width: 9px; height: 7px; }
.bscroll i { width: 15px; height: 8px; background: #cdcdcd; }
.spacing { margin-top: 2px; background: linear-gradient(90deg, #b7c3cd 5px, #000 5px, #000 6px, #fff 6px); }
.five { grid-template-columns: 34px 42px 34px 42px 38px; height: 26px; }

.dialog { position: absolute; left: 239px; top: 32px; width: 460px; height: 586px; background: #efefef; border: 1px solid #1a6fb0; }
.dlg-title { display: flex; align-items: center; height: 25px; padding-left: 3px; background: #fff; font-size: 12px; letter-spacing: -0.31px; }
.dlg-title > svg:first-child { width: 16px; height: 16px; margin-right: 5px; }
.close { width: 12px; height: 12px; margin-left: auto; margin-right: 9px; }
.dlg-head { display: flex; height: 42px; padding: 4px 6px 0 4px; border-bottom: 1px solid #a0a0a0; }
.resize { width: 24px; height: 24px; margin-top: 1px; }
.dlg-heading { margin-left: 6px; }
.dlg-heading b { display: block; height: 18px; line-height: 19px; font-size: 13px; letter-spacing: 0.22px; white-space: nowrap; }
.dlg-heading small { display: block; line-height: 15px; font-size: 10px; letter-spacing: -0.32px; }
.dlg-thumb { width: 33px; height: 34px; margin-left: auto; }
.dlg-body { padding-left: 12px; }
.dlg-body h3 { margin: 0; padding-top: 12px; height: 33px; font-size: 12px; line-height: 16px; letter-spacing: -0.62px; }
.size { display: flex; height: 48px; }
.size-rows { width: 127px; }
.field { display: flex; align-items: center; height: 24px; padding-left: 12px; letter-spacing: -0.35px; }
.field label { width: 47px; }
.input { width: 56px; height: 23px; padding: 2px 3px; line-height: 17px; background: #fff; border: 1px solid #a5a5ab; border-right: 0; }
.spin { display: flex; flex-direction: column; gap: 1px; width: 10px; margin-left: 1px; }
.spin svg { width: 10px; height: 10px; background: #f2f2f2; border: 1px solid #ababab; }
.chain { width: 10px; height: 46px; margin: 1px 0 0 5px; }
.unit { display: flex; align-items: center; width: 47px; height: 25px; padding-left: 4px; background: #e1e1e1; border: 2px solid #adadad; letter-spacing: -0.4px; }
.unit svg { width: 10px; height: 8px; }
.size .unit { margin: 23px 0 0 8px; }
.info { margin: 0 0 0 59px; height: 14px; line-height: 14px; font-size: 10px; letter-spacing: -0.4px; }
.dlg-body h3.offset { padding-top: 10px; height: 30px; letter-spacing: -0.5px; }
.offsets { display: flex; align-items: flex-end; height: 52px; }
.off-rows { width: 205px; }
.wide { height: 26px; }
.wide label { width: 16px; }
.wide .input { width: 159px; }
.btn { padding: 0; background: #e1e1e1; border: 1px solid #adadad; font: inherit; letter-spacing: -0.35px; color: #000; }
.center { width: 168px; height: 24px; margin: 0 0 1px 13px; padding: 1px; border-color: #999; }
.center span { display: block; height: 20px; line-height: 18px; border: 1px dotted #000; letter-spacing: -0.5px; }
.preview { width: 200px; height: 204px; margin: 5px 0 0 123px; padding: 20px; border: 1px solid #fff; border-top-color: #a0a0a0; border-left-color: #a0a0a0; }
.preview svg { width: 156px; height: 160px; }
.dlg-body h3.layers-h { height: 33px; }
.resize-row { display: flex; align-items: center; height: 21px; padding-left: 12px; }
.resize-row label { width: 166px; white-space: nowrap; letter-spacing: -0.39px; }
.select { display: flex; justify-content: space-between; align-items: center; width: 256px; height: 21px; padding-left: 2px; background: #fff; border: 1px solid #a5a5ab; letter-spacing: -0.3px; }
.select i { display: grid; place-items: center; width: 18px; height: 19px; background: #e3e3e3; border: 1px solid #adadad; }
.select svg { width: 10px; height: 8px; }
.buttons { display: flex; gap: 8px; margin: 25px 0 0 1px; }
.buttons .btn { width: 102px; height: 25px; }

.mark { position: absolute; border: 5px solid #f00; border-radius: 2px; }
.mark-size { left: 244px; top: 104px; width: 223px; height: 115px; }
.mark-center { left: 510px; top: 258px; width: 183px; height: 40px; }
.note { position: absolute; margin: 0; font: 18px/22px "DejaVu Sans", sans-serif; color: #f00; white-space: nowrap; }
.note-size { left: 470px; top: 118px; }
.note-center { left: 486px; top: 231px; }
```
